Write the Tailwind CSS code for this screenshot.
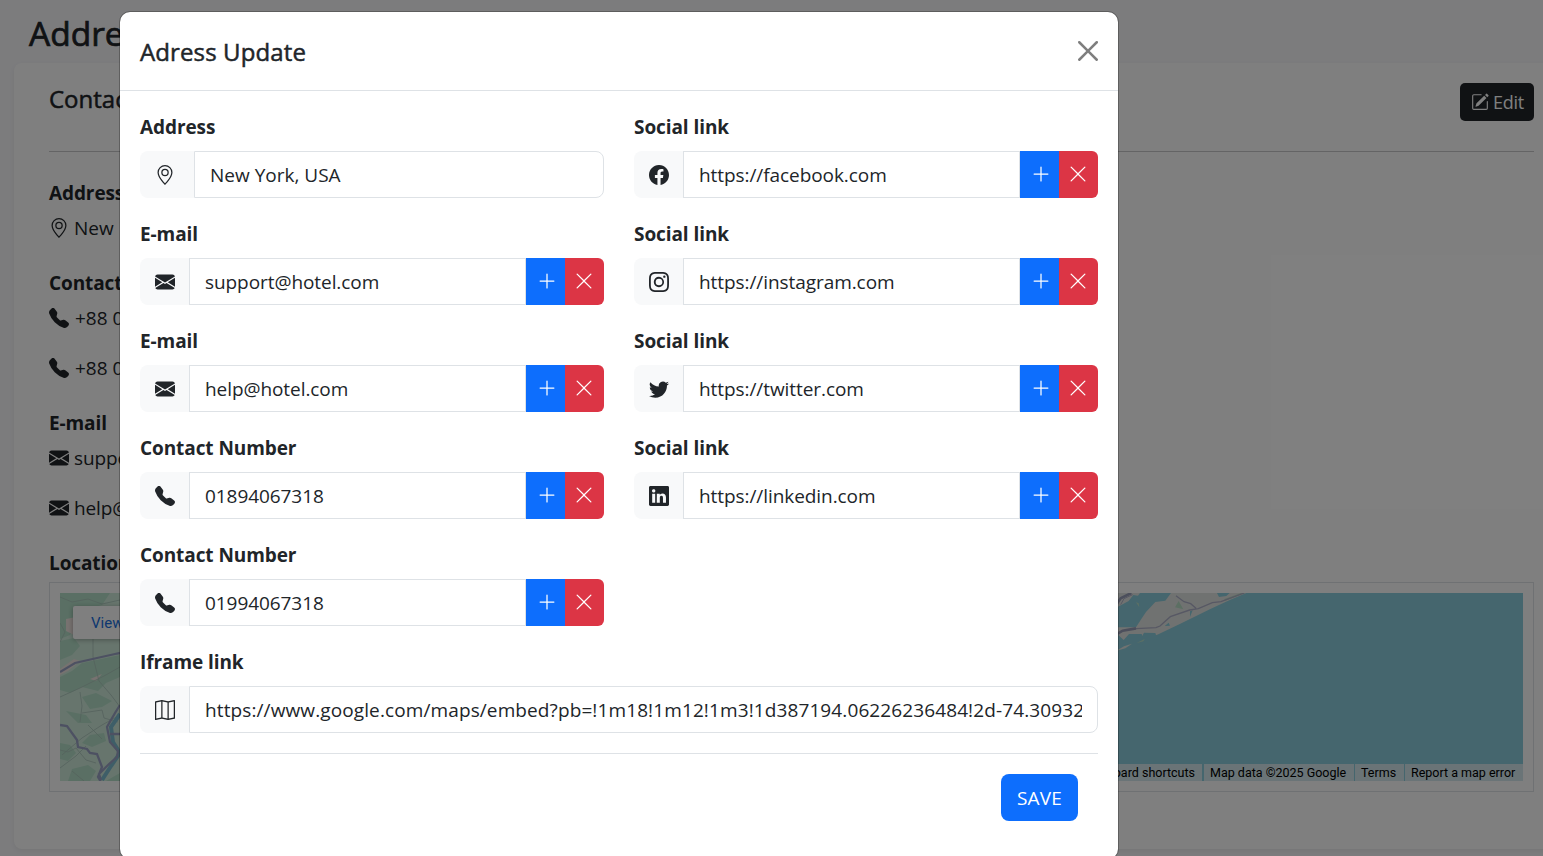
<!DOCTYPE html>
<html lang="en">
<head>
<meta charset="utf-8">
<title>Address</title>
<script src="https://cdn.jsdelivr.net/npm/@tailwindcss/browser@4"></script>
</head>
<body class="h-[856px] w-[1543px] overflow-hidden bg-[#f8f8fb] font-['Open_Sans',sans-serif] text-[19px] leading-[30px] text-[#212529]">
<svg class="hidden">
  <symbol id="geo" viewBox="0 0 16 16"><path d="M12.166 8.94c-.524 1.062-1.234 2.12-1.96 3.07A32 32 0 0 1 8 14.58a32 32 0 0 1-2.206-2.57c-.726-.95-1.436-2.008-1.96-3.07C3.304 7.867 3 6.862 3 6a5 5 0 0 1 10 0c0 .862-.305 1.867-.834 2.94M8 16s6-5.686 6-10A6 6 0 0 0 2 6c0 4.314 6 10 6 10"/><path d="M8 8a2 2 0 1 1 0-4 2 2 0 0 1 0 4m0 1a3 3 0 1 0 0-6 3 3 0 0 0 0 6"/></symbol>
  <symbol id="mail" viewBox="0 0 16 16"><path d="M.05 3.555A2 2 0 0 1 2 2h12a2 2 0 0 1 1.95 1.555L8 8.414zM0 4.697v7.104l5.803-3.558zM6.761 8.83l-6.57 4.027A2 2 0 0 0 2 14h12a2 2 0 0 0 1.808-1.144l-6.57-4.027L8 9.586zm3.436-.586L16 11.801V4.697z"/></symbol>
  <symbol id="phone" viewBox="0 0 16 16"><path d="M1.885.511a1.745 1.745 0 0 1 2.61.163L6.29 2.98c.329.423.445.974.315 1.494l-.547 2.19a.68.68 0 0 0 .178.643l2.457 2.457a.68.68 0 0 0 .644.178l2.189-.547a1.75 1.75 0 0 1 1.494.315l2.306 1.794c.829.645.905 1.87.163 2.611l-1.034 1.034c-.74.74-1.846 1.065-2.877.702a18.6 18.6 0 0 1-7.01-4.42 18.6 18.6 0 0 1-4.42-7.009c-.362-1.03-.037-2.137.703-2.877z"/></symbol>
  <symbol id="facebook" viewBox="0 0 16 16"><path d="M16 8.049c0-4.446-3.582-8.05-8-8.05C3.58 0-.002 3.603-.002 8.05c0 4.017 2.926 7.347 6.75 7.951v-5.625h-2.03V8.05H6.75V6.275c0-2.017 1.195-3.131 3.022-3.131.876 0 1.791.157 1.791.157v1.98h-1.009c-.993 0-1.303.621-1.303 1.258v1.51h2.218l-.354 2.326H9.25V16c3.824-.604 6.75-3.934 6.75-7.951"/></symbol>
  <symbol id="instagram" viewBox="0 0 16 16"><path d="M8 0C5.829 0 5.556.01 4.703.048 3.85.088 3.269.222 2.76.42a3.9 3.9 0 0 0-1.417.923A3.9 3.9 0 0 0 .42 2.76C.222 3.268.087 3.85.048 4.7.01 5.555 0 5.827 0 8.001c0 2.172.01 2.444.048 3.297.04.852.174 1.433.372 1.942.205.526.478.972.923 1.417.444.445.89.719 1.416.923.51.198 1.09.333 1.942.372C5.555 15.99 5.827 16 8 16s2.444-.01 3.298-.048c.851-.04 1.434-.174 1.943-.372a3.9 3.9 0 0 0 1.416-.923c.445-.445.718-.891.923-1.417.197-.509.332-1.09.372-1.942C15.99 10.445 16 10.173 16 8s-.01-2.445-.048-3.299c-.04-.851-.175-1.433-.372-1.941a3.9 3.9 0 0 0-.923-1.417A3.9 3.9 0 0 0 13.24.42c-.51-.198-1.092-.333-1.943-.372C10.443.01 10.172 0 7.998 0zm-.717 1.442h.718c2.136 0 2.389.007 3.232.046.78.035 1.204.166 1.486.275.373.145.64.319.92.599s.453.546.598.92c.11.281.24.705.275 1.485.039.843.047 1.096.047 3.231s-.008 2.389-.047 3.232c-.035.78-.166 1.203-.275 1.485a2.5 2.5 0 0 1-.599.919c-.28.28-.546.453-.92.598-.28.11-.704.24-1.485.276-.843.038-1.096.047-3.232.047s-2.39-.009-3.233-.047c-.78-.036-1.203-.166-1.485-.276a2.5 2.5 0 0 1-.92-.598 2.5 2.5 0 0 1-.6-.92c-.109-.281-.24-.705-.275-1.485-.038-.843-.046-1.096-.046-3.233s.008-2.388.046-3.231c.036-.78.166-1.204.276-1.486.145-.373.319-.64.599-.92s.546-.453.92-.598c.282-.11.705-.24 1.485-.276.738-.034 1.024-.044 2.515-.045zm4.988 1.328a.96.96 0 1 0 0 1.92.96.96 0 0 0 0-1.92m-4.27 1.122a4.109 4.109 0 1 0 0 8.217 4.109 4.109 0 0 0 0-8.217m0 1.441a2.667 2.667 0 1 1 0 5.334 2.667 2.667 0 0 1 0-5.334"/></symbol>
  <symbol id="twitter" viewBox="0 0 16 16"><path d="M5.026 15c6.038 0 9.341-5.003 9.341-9.334q.002-.211-.006-.422A6.7 6.7 0 0 0 16 3.542a6.7 6.7 0 0 1-1.889.518 3.3 3.3 0 0 0 1.447-1.817 6.5 6.5 0 0 1-2.087.793A3.286 3.286 0 0 0 7.875 6.03a9.32 9.32 0 0 1-6.767-3.429 3.29 3.29 0 0 0 1.018 4.382A3.3 3.3 0 0 1 .64 6.575v.045a3.29 3.29 0 0 0 2.632 3.218 3.2 3.2 0 0 1-.865.115 3 3 0 0 1-.614-.057 3.28 3.28 0 0 0 3.067 2.277A6.6 6.6 0 0 1 .78 13.58a6 6 0 0 1-.78-.045A9.34 9.34 0 0 0 5.026 15"/></symbol>
  <symbol id="linkedin" viewBox="0 0 16 16"><path d="M0 1.146C0 .513.526 0 1.175 0h13.65C15.474 0 16 .513 16 1.146v13.708c0 .633-.526 1.146-1.175 1.146H1.175C.526 16 0 15.487 0 14.854zm4.943 12.248V6.169H2.542v7.225zm-1.2-8.212c.837 0 1.358-.554 1.358-1.248-.015-.709-.52-1.248-1.342-1.248S2.4 3.226 2.4 3.934c0 .694.521 1.248 1.327 1.248zm4.908 8.212V9.359c0-.216.016-.432.08-.586.173-.431.568-.878 1.232-.878.869 0 1.216.662 1.216 1.634v3.865h2.401V9.25c0-2.22-1.184-3.252-2.764-3.252-1.274 0-1.845.7-2.165 1.193v.025h-.016l.016-.025V6.169h-2.4c.03.678 0 7.225 0 7.225z"/></symbol>
  <symbol id="map" viewBox="0 0 16 16"><path fill-rule="evenodd" d="M15.817.113A.5.5 0 0 1 16 .5v14a.5.5 0 0 1-.402.49l-5 1a.5.5 0 0 1-.196 0L5.5 15.01l-4.902.98A.5.5 0 0 1 0 15.5v-14a.5.5 0 0 1 .402-.49l5-1a.5.5 0 0 1 .196 0L10.5.99l4.902-.98a.5.5 0 0 1 .415.103M10 1.91l-4-.8v12.98l4 .8zm1 12.98 4-.8V1.11l-4 .8zm-6-.8V1.11l-4 .8v12.98z"/></symbol>
  <symbol id="plus" viewBox="0 0 16 16"><path d="M8 2a.5.5 0 0 1 .5.5v5h5a.5.5 0 0 1 0 1h-5v5a.5.5 0 0 1-1 0v-5h-5a.5.5 0 0 1 0-1h5v-5A.5.5 0 0 1 8 2"/></symbol>
  <symbol id="x" viewBox="0 0 16 16"><path d="M2.146 2.854a.5.5 0 1 1 .708-.708L8 7.293l5.146-5.147a.5.5 0 0 1 .708.708L8.707 8l5.147 5.146a.5.5 0 0 1-.708.708L8 8.707l-5.146 5.147a.5.5 0 0 1-.708-.708L7.293 8z"/></symbol>
  <symbol id="close" viewBox="0 0 16 16"><path d="M.293.293a1 1 0 0 1 1.414 0L8 6.586 14.293.293a1 1 0 1 1 1.414 1.414L9.414 8l6.293 6.293a1 1 0 0 1-1.414 1.414L8 9.414l-6.293 6.293a1 1 0 0 1-1.414-1.414L6.586 8 .293 1.707a1 1 0 0 1 0-1.414"/></symbol>
  <symbol id="edit" viewBox="0 0 16 16"><path d="M15.502 1.94a.5.5 0 0 1 0 .706L14.459 3.69l-2-2L13.502.646a.5.5 0 0 1 .707 0l1.293 1.293zm-1.75 2.456-2-2L4.939 9.21a.5.5 0 0 0-.121.196l-.805 2.414a.25.25 0 0 0 .316.316l2.414-.805a.5.5 0 0 0 .196-.12l6.813-6.814z"/><path fill-rule="evenodd" d="M1 13.5A1.5 1.5 0 0 0 2.5 15h11a1.5 1.5 0 0 0 1.5-1.5v-6a.5.5 0 0 0-1 0v6a.5.5 0 0 1-.5.5h-11a.5.5 0 0 1-.5-.5v-11a.5.5 0 0 1 .5-.5H9a.5.5 0 0 0 0-1H2.5A1.5 1.5 0 0 0 1 2.5z"/></symbol>
</svg>

<main class="w-[1600px] pl-[14px] pt-[11px]">
  <h1 class="mb-[7px] pl-[15px] text-[33.5px] font-medium leading-[45px] [-webkit-text-stroke:0.7px]">Address</h1>
  <section class="h-[786px] w-[1555px] rounded-[8px] bg-white pl-[35px] pr-[35px] pt-[20px] shadow-[0_2px_5px_rgba(0,0,0,0.06)]">
    <div class="flex h-[69px] w-[1485px] items-start justify-between border-b border-[#c8c9ca]">
      <h2 class="pt-[1px] text-[24px] font-medium [-webkit-text-stroke:0.5px]">Contacts</h2>
      <button class="flex h-[38px] w-[74px] items-center gap-[4px] rounded-[5px] bg-[#212529] pl-[11px] text-[18px] tracking-[-0.3px] text-white"><svg class="size-[18px]" fill="currentColor"><use href="#edit"/></svg>Edit</button>
    </div>
    <h3 class="mt-[26px] font-bold tracking-[-0.1px]">Address</h3>
    <p class="mt-[5px] flex items-center gap-[5px] [word-spacing:1.5px]"><svg class="size-5" fill="currentColor"><use href="#geo"/></svg>New York, USA</p>
    <h3 class="mt-[25px] font-bold tracking-[-0.1px]">Contact Number</h3>
    <p class="mt-[5px] flex items-center gap-[6px]"><svg class="size-5" fill="currentColor"><use href="#phone"/></svg>+88 01894067318</p>
    <p class="mt-[20px] flex items-center gap-[6px]"><svg class="size-5" fill="currentColor"><use href="#phone"/></svg>+88 01994067318</p>
    <h3 class="mt-[25px] font-bold tracking-[-0.1px]">E-mail</h3>
    <p class="mt-[5px] flex items-center gap-[5px] tracking-[-0.1px]"><svg class="size-5" fill="currentColor"><use href="#mail"/></svg>support@hotel.com</p>
    <p class="mt-[20px] flex items-center gap-[5px] tracking-[-0.1px]"><svg class="size-5" fill="currentColor"><use href="#mail"/></svg>help@hotel.com</p>
    <h3 class="mt-[25px] font-bold tracking-[-0.1px]">Location</h3>
    <div class="mt-[4px] h-[210px] w-[1485px] border border-[#dee2e6] p-[10px]">
      <div class="relative h-[188px] w-[1463px] overflow-hidden bg-[#8acddc]">
        <svg class="block h-[188px] w-[1463px]" viewBox="0 0 1463 188" fill="none">
          <path fill="#cfeadb" d="M0 0h400v188H0z"/>
          <path fill="#b4dfc8" d="M0 0h50l-8 12-14 4-8 12-10 14-10 4zM0 48l14-3 6 8-8 9-12 5zM60 62v22l-14 6-8 8-16-4-12 6-10-3V84l12-6 10-8zM22 104l14-4 16 8-10 6-12 2zM6 118l20 4 6 8-14 0zM30 142l14-2 2 8-14 6-10-4zM0 150l10 2 6 8-8 8-8-2zM12 176l16-4 8 6-6 10H8zM60 180v8H46z"/>
          <path fill="#eee4e0" d="M6 26l10-2 4 10-6 8-8-4zM0 76l14-10 6 2-12 10-8 4zM30 86l12-5-6 7z"/>
          <path stroke="#a9c4ba" stroke-width=".8" d="M0 4l12 5 16-3 14 5 18-4M0 30l5 9-5 10M33 14v50l6 24 12 14 9 12M0 104l20-9 24-12 16-9M20 99l2 14-2 16M22 120l20-3 2 8 14 4M2 162l20-17 20-13 18-10M0 157l8 2 8-4 10 12 10 3M0 175l16-12 10-10M12 178l12 10M28 132l14 14"/>
          <path stroke="#7dbdd0" stroke-width="4" d="M60 121l-9 13 2 15 7 11-9 13-9 14"/>
          <path stroke="#9ba3c4" stroke-width="2.3" d="M0 79l15-9 22-5 18-4 5-1M0 132l7 1 10 14 1 7 9 2 3 4 7 1 5 13-4 10 3 5M41 187l-2-6 9-9 9-8 1-6-8-9-3-15 8-14 5-8M50 141h10"/>
          <g transform="translate(1056 -3) scale(.33333)">
            <path fill="#e1e5e2" d="M0 9h72l-6 8-14-2-14 18L6 50zM165 9h138l6 12 22-3 10-9h50l-48 20-60 28-90 44-66 32-44 17-6-18-38 0-16 18L6 134v-22l54 0 14-22 16-24 28-30 30-4zM0 183l24-14 24-8-20 14z"/>
            <path fill="#8acddc" d="M222 64l8-3-8 20zM146 108l12-10 4 9zM84 128l34 1 6 18-38 15-22 2z"/>
            <path fill="#b9dfc7" d="M188 33l-11 19 25 6zM60 37l10 15-2-12zM62 159l24-12-4 7zM325 27l50-18h12l-60 24z"/>
            <path stroke="#aeb0c8" stroke-width="4" d="M60 116l60-3 12-5 31-28 58-20 26-4 42-18 26-3 70-26M180 17l24 18 20 6 16 14"/>
            <path stroke="#999eb9" stroke-width="8" d="M0 134l20-12 40-7M0 45l14-20 32-16"/>
            <path stroke="#aeb0c8" stroke-width="3" d="M14 44l10-18 26-12"/>
          </g>
        </svg>
        <div class="absolute left-[13px] top-[13px] flex h-[33px] w-[140px] items-center rounded-[2px] bg-white pl-[18px] font-[Roboto] text-[15px] text-[#1a6fe0] shadow-[0_1px_5px_rgba(0,0,0,0.3)]">View larger map</div>
        <div class="absolute bottom-0 right-0 flex h-[17px] gap-px font-[Roboto] text-[12.5px] leading-[17px] text-black">
          <span class="mr-px w-[120px] whitespace-nowrap bg-[#f5f5f5]/70 pr-[7px] text-right">Keyboard shortcuts</span>
          <span class="w-[150px] whitespace-nowrap bg-[#f5f5f5]/70 pl-[6px]">Map data ©2025 Google</span>
          <span class="w-[49px] bg-[#f5f5f5]/70 pl-[6px]">Terms</span>
          <span class="w-[118px] whitespace-nowrap bg-[#f5f5f5]/70 pl-[6px]">Report a map error</span>
        </div>
      </div>
    </div>
  </section>
</main>

<div class="absolute inset-0 bg-black/50"></div>

<div class="absolute left-[120px] top-[12px] h-[847px] w-[998px] rounded-[10px] bg-white outline outline-black/25">
  <header class="flex h-[79px] items-center justify-between border-b border-[#dee2e6] px-5">
    <h5 class="pt-[2px] text-[24px] font-medium tracking-[0.12px] [-webkit-text-stroke:0.5px]">Adress Update</h5>
    <svg class="size-5 opacity-50" fill="#000"><use href="#close"/></svg>
  </header>
  <form class="px-5 pt-[21px]">
    <div class="grid grid-cols-2 gap-x-[30px]">
      <div id="left"></div>
      <div id="right"></div>
    </div>
    <div id="wide"></div>
    <div class="flex justify-end border-t border-[#dee2e6] pr-5 pt-5">
      <button type="button" class="h-[47px] w-[77px] rounded-[8px] bg-[#0d6efd] pt-px text-[19px] tracking-[0.15px] text-white">SAVE</button>
    </div>
  </form>
</div>

<script>
const row = (label, icon, value, buttons, first) => `
<div class="mb-5 h-[87px]">
  <div class="mb-[9px] h-[31px] font-bold leading-[30px] tracking-[-0.08px]">${label}</div>
  <div class="-mt-px flex h-[47px]">
    <span class="${first ? 'w-[54px]' : 'w-[49px]'} flex shrink-0 items-center rounded-l-[8px] bg-[#f8f9fa] pl-[15px]"><svg class="size-5" fill="currentColor"><use href="#${icon}"/></svg></span>
    <div class="${buttons ? 'tracking-[-0.07px]' : first ? 'rounded-r-[8px]' : 'rounded-r-[8px] tracking-[0.11px]'} flex min-w-0 flex-1 items-center border border-[#dee2e6] px-[15px]"><span class="w-full overflow-hidden whitespace-nowrap">${value}</span></div>
    ${buttons ? `<span class="flex w-[39px] items-center justify-center bg-[#0d6efd] pb-[2px] pl-[2px] text-white"><svg class="size-5" fill="currentColor"><use href="#plus"/></svg></span><span class="flex w-[39px] items-center justify-center rounded-r-[6px] bg-[#dc3545] pb-[2px] pr-px text-white"><svg class="size-5" fill="currentColor"><use href="#x"/></svg></span>` : ''}
  </div>
</div>`;
document.getElementById('left').innerHTML =
  row('Address', 'geo', 'New York, USA', false, true) +
  row('E-mail', 'mail', 'support@hotel.com', true) +
  row('E-mail', 'mail', 'help@hotel.com', true) +
  row('Contact Number', 'phone', '01894067318', true) +
  row('Contact Number', 'phone', '01994067318', true);
document.getElementById('right').innerHTML =
  row('Social link', 'facebook', 'https://facebook.com', true) +
  row('Social link', 'instagram', 'https://instagram.com', true) +
  row('Social link', 'twitter', 'https://twitter.com', true) +
  row('Social link', 'linkedin', 'https://linkedin.com', true);
document.getElementById('wide').innerHTML =
  `<div class="-mb-px">${row('Iframe link', 'map', 'https://www.google.com/maps/embed?pb=!1m18!1m12!1m3!1d387194.06226236484!2d-74.309327', false)}</div>`;
</script>
</body>
</html>
